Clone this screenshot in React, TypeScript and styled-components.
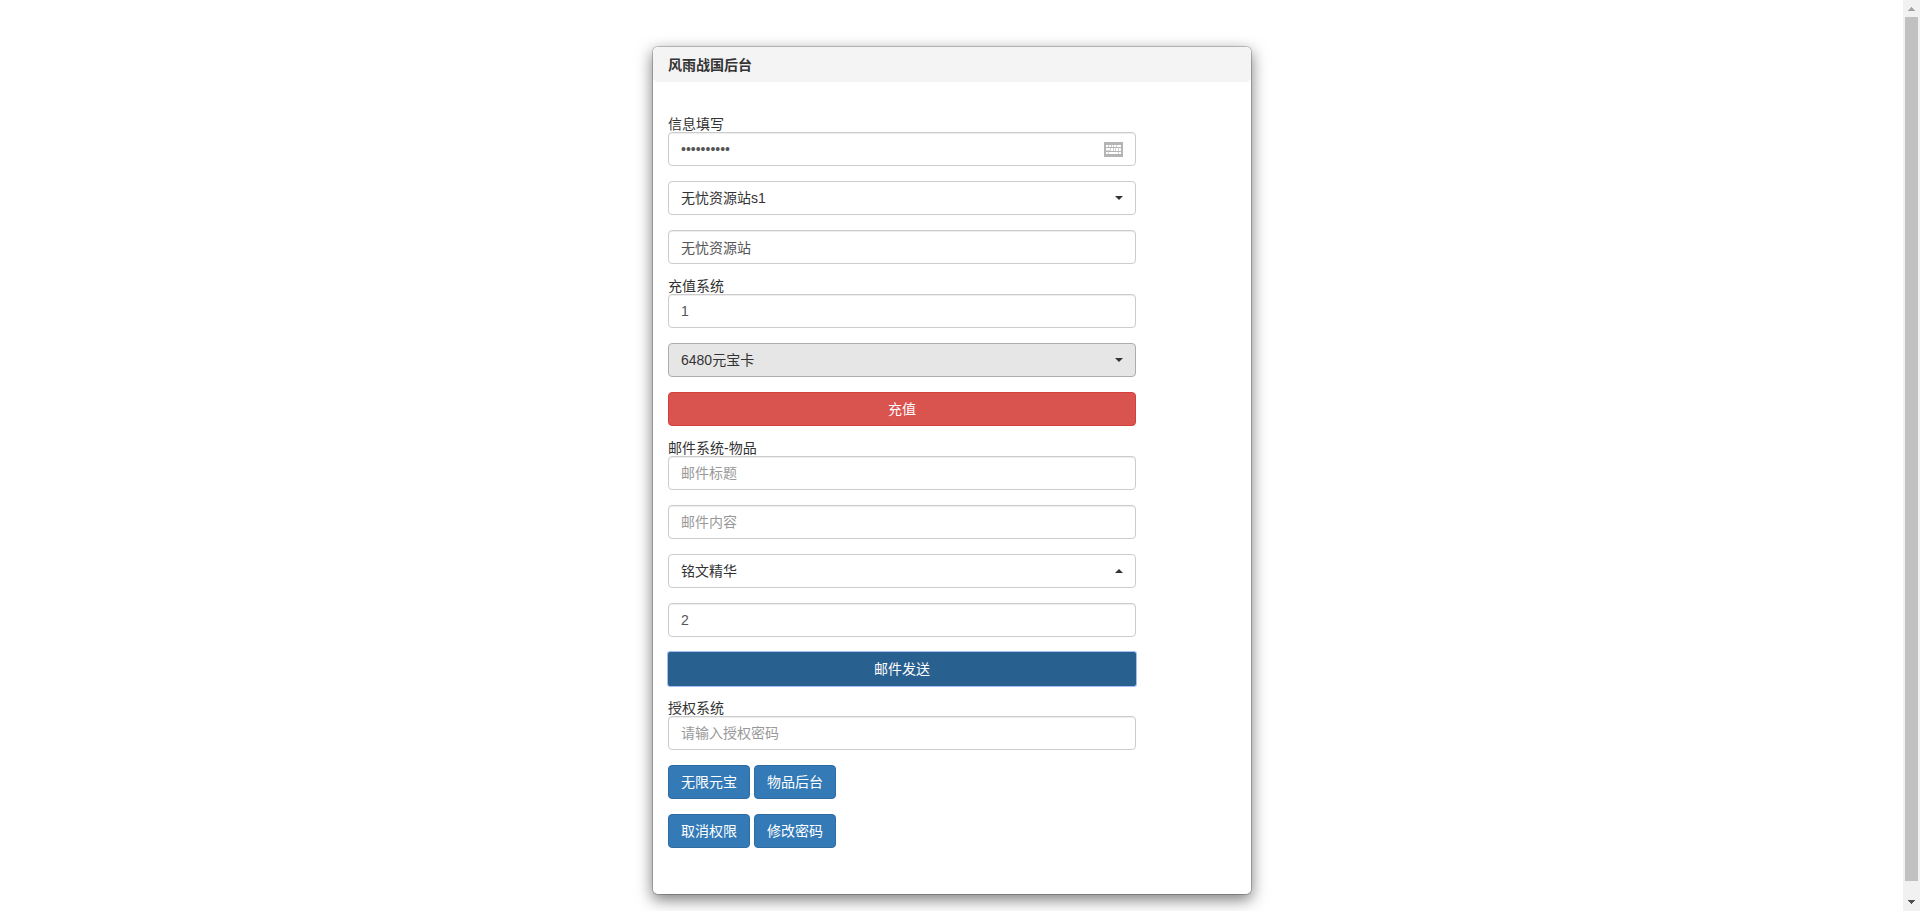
import React from "react";
import styled, { createGlobalStyle, css } from "styled-components";

const GlobalStyle = createGlobalStyle`
  *, *::before, *::after { box-sizing: border-box; }
  html, body { margin: 0; height: 100%; }
  body {
    overflow: hidden;
    background: #fff;
    color: #333;
    font-family: "Liberation Sans", "Noto Sans CJK SC", sans-serif;
    font-size: 14px;
    line-height: 20px;
  }
`;

const Shell = styled.div`
  display: grid;
  grid-template-columns: minmax(0, 1fr) 17px;
  height: 100vh;
`;

const Viewport = styled.main`
  overflow-y: auto;
  scrollbar-width: none;
  padding: 46px 16px 30px 17px;
`;

const ScrollTrack = styled.div`
  display: flex;
  flex-direction: column;
  align-items: center;
  justify-content: space-between;
  background: #f1f1f1;
`;

const ScrollArrow = styled.svg`
  display: block;
  width: 17px;
  height: 17px;
`;

const ScrollThumb = styled.div`
  flex: 1;
  width: 13px;
  margin-bottom: 13px;
  background: #c1c1c1;
`;

const Dialog = styled.section`
  width: 100%;
  max-width: 600px;
  margin: 0 auto;
  padding-bottom: 16px;
  background: #fff;
  background-clip: padding-box;
  border: 1px solid rgba(0, 0, 0, 0.2);
  border-radius: 6px;
  box-shadow: 0 5px 15px rgba(0, 0, 0, 0.5);
`;

const Title = styled.h1`
  margin: 0;
  padding: 8px 15px 7px;
  border-radius: 5px;
  background: #f4f4f4;
  font-size: 14px;
  line-height: 20px;
`;

const Form = styled.form`
  display: flex;
  flex-direction: column;
  gap: 15px;
  padding: 35px 15px 30px;
  max-width: 498px;
`;

const Group = styled.div`
  display: flex;
  flex-direction: column;
`;

const Caption = styled.label`
  line-height: 15px;
`;

const controlBox = css`
  width: 100%;
  height: 34px;
  padding: 6px 12px;
  border: 1px solid #ccc;
  border-radius: 4px;
  font: inherit;
`;

const TextField = styled.input`
  ${controlBox}
  background: #fff;
  color: #555;
  box-shadow: inset 0 1px 1px rgba(0, 0, 0, 0.075);
  outline: none;
  &::placeholder { color: #999; opacity: 1; }
`;

const Wrap = styled.div`
  position: relative;
`;

const KeyboardIcon = styled.svg`
  position: absolute;
  top: 10px;
  right: 13px;
  width: 19px;
  height: 15px;
`;

const Select = styled.select<{ $pressed?: boolean }>`
  ${controlBox}
  display: block;
  appearance: none;
  color: #333;
  background: ${(p) => (p.$pressed ? "#e6e6e6" : "#fff")};
  border-color: ${(p) => (p.$pressed ? "#adadad" : "#ccc")};
`;

const Caret = styled.span<{ $up?: boolean }>`
  position: absolute;
  top: 15px;
  right: 13px;
  border: 4px solid transparent;
  pointer-events: none;
  ${(p) => (p.$up ? "border-top: 0; border-bottom-color: #333;" : "border-bottom: 0; border-top-color: #333;")}
`;

const tones = {
  primary: ["#337ab7", "#2e6da4"],
  danger: ["#d9534f", "#d43f3a"],
  active: ["#286090", "#286090"],
};

const Button = styled.button<{ $tone: keyof typeof tones; $block?: boolean }>`
  ${controlBox}
  width: ${(p) => (p.$block ? "100%" : "auto")};
  color: #fff;
  background: ${(p) => tones[p.$tone][0]};
  border-color: ${(p) => tones[p.$tone][1]};
  cursor: pointer;
  ${(p) => p.$tone === "active" && "border-radius: 2px; box-shadow: 0 0 0 1px #a2c0f5;"}
`;

const ButtonRow = styled.div`
  display: flex;
  gap: 4px;
`;

function Dropdown({ label, value, pressed, up }: { label: string; value: string; pressed?: boolean; up?: boolean }) {
  return (
    <Wrap>
      <Select aria-label={label} defaultValue={value} $pressed={pressed}>
        <option value={value}>{value}</option>
      </Select>
      <Caret $up={up} />
    </Wrap>
  );
}

export default function App() {
  return (
    <>
      <GlobalStyle />
      <Shell>
        <Viewport>
          <Dialog>
            <Title>风雨战国后台</Title>
            <Form onSubmit={(e) => e.preventDefault()}>
              <Group>
                <Caption htmlFor="password">信息填写</Caption>
                <Wrap>
                  <TextField id="password" type="password" defaultValue="0123456789" />
                  <KeyboardIcon viewBox="0 0 19 15" shapeRendering="crispEdges" aria-hidden="true">
                    <path fill="#b4b4b4" d="M0 0h19v15H0z" />
                    <path fill="#fff" d="M2 3h15v2H2zM2 6h15v3H2zM2 10h15v2H2z" />
                    <path
                      fill="#b4b4b4"
                      fillOpacity="0.6"
                      d="M4 3h1v2H4zM7 3h1v2H7zM9 3h1v2H9zM12 3h1v2h-1zM6 6h1v3H6zM9 6h1v3H9zM11 6h1v3h-1zM14 6h1v3h-1zM4 10h1v2H4zM14 10h1v2h-1zM2 8h4v1H2z"
                    />
                  </KeyboardIcon>
                </Wrap>
              </Group>
              <Dropdown label="选择区服" value="无忧资源站s1" />
              <TextField aria-label="角色名" defaultValue="无忧资源站" />
              <Group>
                <Caption htmlFor="recharge">充值系统</Caption>
                <TextField id="recharge" defaultValue="1" />
              </Group>
              <Dropdown label="充值类型" value="6480元宝卡" pressed />
              <Button type="button" $tone="danger" $block>充值</Button>
              <Group>
                <Caption htmlFor="mail-title">邮件系统-物品</Caption>
                <TextField id="mail-title" placeholder="邮件标题" />
              </Group>
              <TextField aria-label="邮件内容" placeholder="邮件内容" />
              <Dropdown label="物品" value="铭文精华" up />
              <TextField aria-label="数量" defaultValue="2" />
              <Button type="button" $tone="active" $block>邮件发送</Button>
              <Group>
                <Caption htmlFor="auth">授权系统</Caption>
                <TextField id="auth" type="password" placeholder="请输入授权密码" />
              </Group>
              <ButtonRow>
                <Button type="button" $tone="primary">无限元宝</Button>
                <Button type="button" $tone="primary">物品后台</Button>
              </ButtonRow>
              <ButtonRow>
                <Button type="button" $tone="primary">取消权限</Button>
                <Button type="button" $tone="primary">修改密码</Button>
              </ButtonRow>
            </Form>
          </Dialog>
        </Viewport>
        <ScrollTrack aria-hidden="true">
          <ScrollArrow viewBox="0 0 17 17" shapeRendering="crispEdges">
            <path fill="#a3a3a3" d="M8 7h1v1H8zM7 8h3v1H7zM6 9h5v1H6zM5 10h7v1H5z" />
          </ScrollArrow>
          <ScrollThumb />
          <ScrollArrow viewBox="0 0 17 17" shapeRendering="crispEdges">
            <path fill="#505050" d="M5 6h7v1H5zM6 7h5v1H6zM7 8h3v1H7zM8 9h1v1H8z" />
          </ScrollArrow>
        </ScrollTrack>
      </Shell>
    </>
  );
}
